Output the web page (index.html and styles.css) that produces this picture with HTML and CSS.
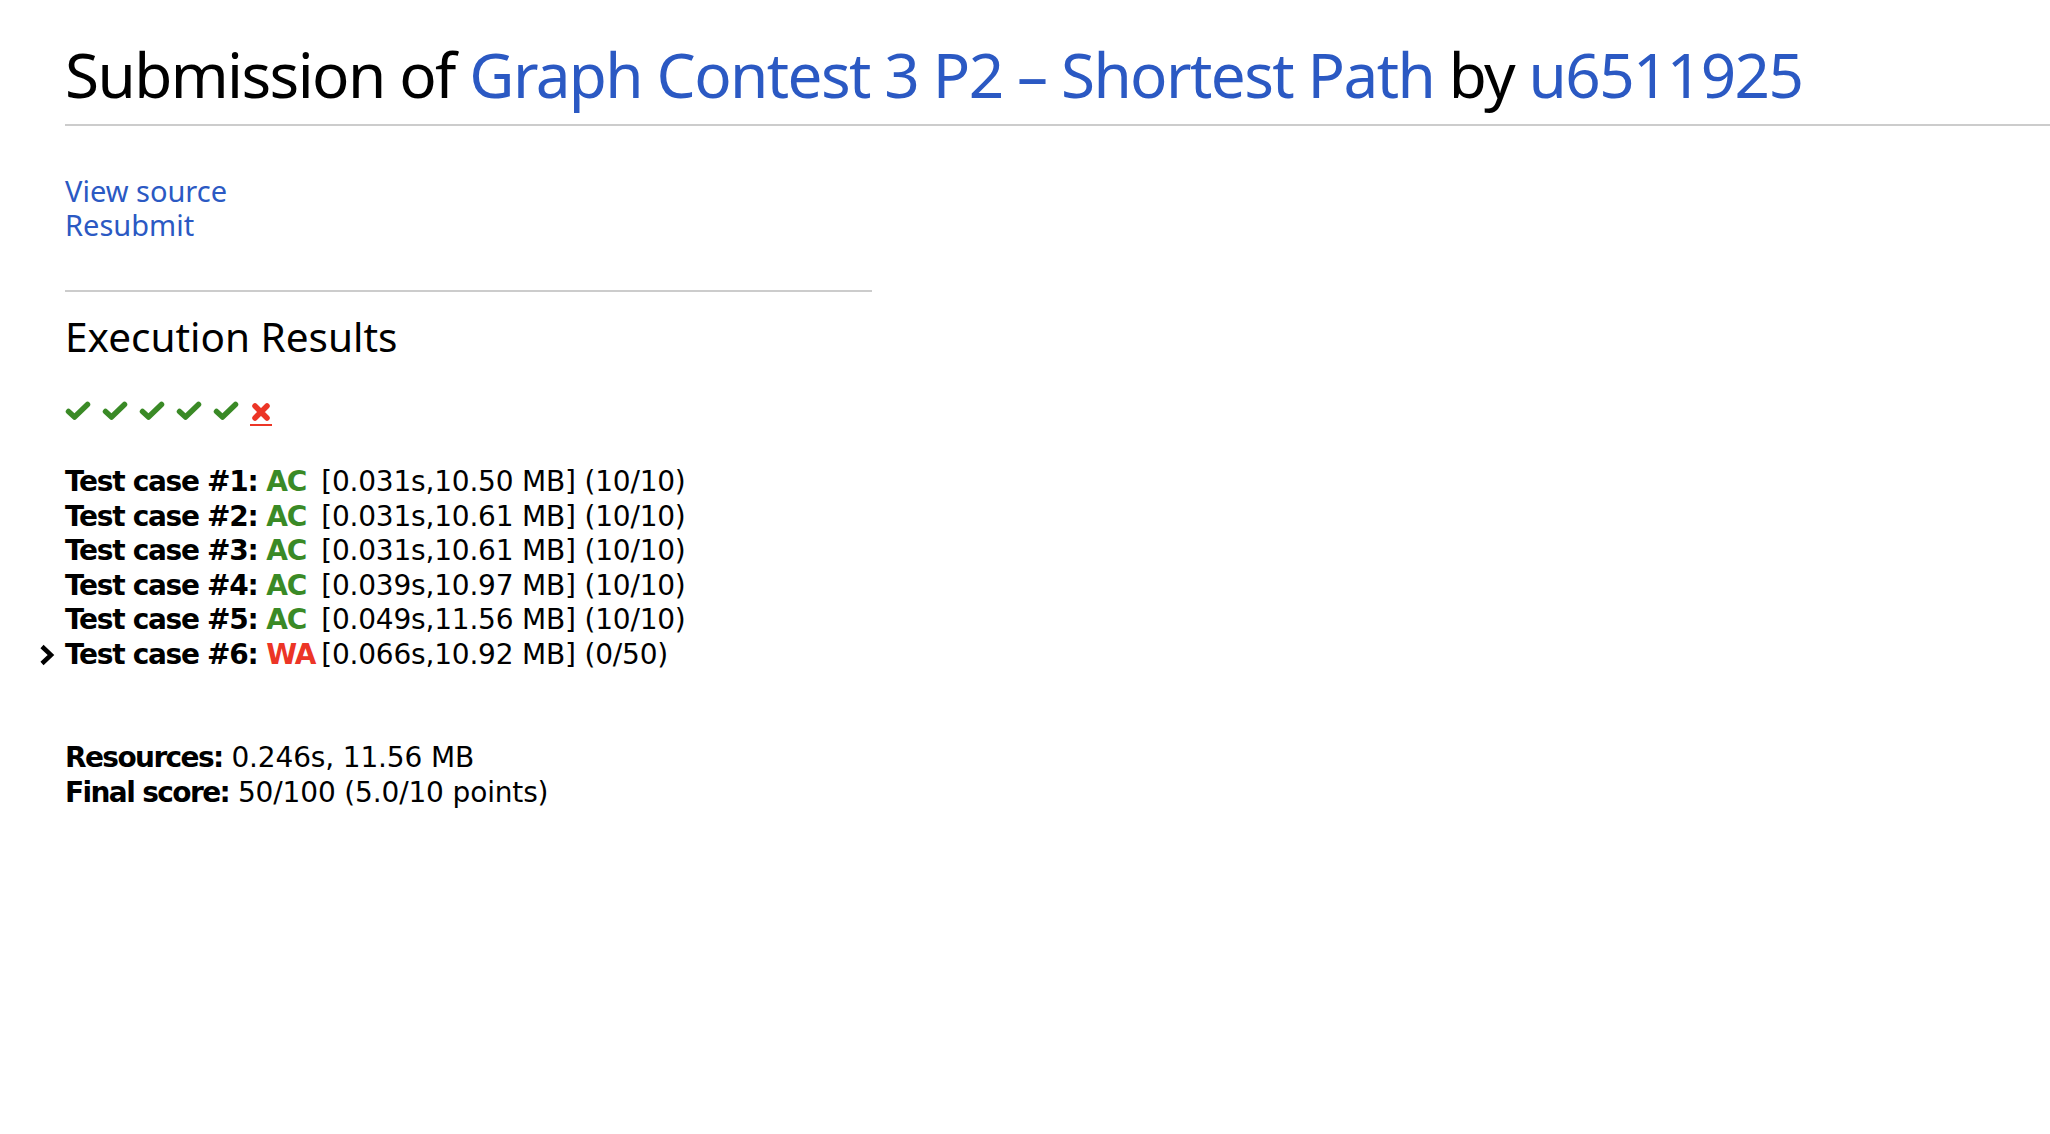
FILE: index.html
```html
<!DOCTYPE html>
<html lang="en">
<head>
<meta charset="utf-8">
<title>Submission of Graph Contest 3 P2 – Shortest Path by u6511925</title>
<link rel="stylesheet" href="styles.css">
</head>
<body>
<h2 class="page-title">Submission of <a href="#">Graph Contest 3 P2 – Shortest Path</a> by <a href="#">u6511925</a></h2>
<hr class="rule-full">
<main class="content">
  <div class="actions">
    <a href="#">View source</a>
    <a href="#">Resubmit</a>
  </div>
  <hr class="rule-section">
  <h3 class="section-title">Execution Results</h3>
  <div class="status-icons">
    <span class="icon-ok"><svg viewBox="0 0 26 20" width="26" height="20"><polyline points="3.5,10.5 9.5,16 22.5,3.5" /></svg></span>
    <span class="icon-ok"><svg viewBox="0 0 26 20" width="26" height="20"><polyline points="3.5,10.5 9.5,16 22.5,3.5" /></svg></span>
    <span class="icon-ok"><svg viewBox="0 0 26 20" width="26" height="20"><polyline points="3.5,10.5 9.5,16 22.5,3.5" /></svg></span>
    <span class="icon-ok"><svg viewBox="0 0 26 20" width="26" height="20"><polyline points="3.5,10.5 9.5,16 22.5,3.5" /></svg></span>
    <span class="icon-ok"><svg viewBox="0 0 26 20" width="26" height="20"><polyline points="3.5,10.5 9.5,16 22.5,3.5" /></svg></span>
    <a href="#" class="icon-bad"><svg viewBox="0 0 20 18" width="20" height="18"><path d="M4 3 L16 15 M16 3 L4 15" /></svg></a>
  </div>
  <div class="cases">
    <div class="case"><b>Test case #1:</b> <span class="st st-ac">AC</span><span class="meta">[0.031s,10.50 MB] (10/10)</span></div>
    <div class="case"><b>Test case #2:</b> <span class="st st-ac">AC</span><span class="meta">[0.031s,10.61 MB] (10/10)</span></div>
    <div class="case"><b>Test case #3:</b> <span class="st st-ac">AC</span><span class="meta">[0.031s,10.61 MB] (10/10)</span></div>
    <div class="case"><b>Test case #4:</b> <span class="st st-ac">AC</span><span class="meta">[0.039s,10.97 MB] (10/10)</span></div>
    <div class="case"><b>Test case #5:</b> <span class="st st-ac">AC</span><span class="meta">[0.049s,11.56 MB] (10/10)</span></div>
    <div class="case case-open"><svg class="chevron" viewBox="0 0 18 24" width="18" height="24"><polyline points="4,3.5 13,12 4,20.5" /></svg><b>Test case #6:</b> <span class="st st-wa">WA</span><span class="meta">[0.066s,10.92 MB] (0/50)</span></div>
  </div>
  <div class="summary">
    <div><b>Resources:</b> 0.246s, 11.56 MB</div>
    <div><b>Final score:</b> 50/100 (5.0/10 points)</div>
  </div>
</main>
</body>
</html>
```

FILE: styles.css
```css
html, body {
  margin: 0;
  padding: 0;
  background: #fff;
  color: #000;
}
body {
  font-family: "Noto Sans", "Open Sans", sans-serif;
}
a {
  color: #2b59c3;
  text-decoration: none;
}
.page-title {
  margin: 32px 0 0 65px;
  font-size: 62px;
  font-weight: 400;
  line-height: 84px;
  letter-spacing: -1.6px;
  white-space: nowrap;
}
.rule-full {
  margin: 8px 0 0 65px;
  border: 0;
  border-top: 2px solid #cccccc;
  height: 0;
}
.content {
  padding-left: 65px;
}
.actions {
  margin-top: 48px;
  display: flex;
  flex-direction: column;
  align-items: flex-start;
  gap: 1px;
  font-size: 29px;
  line-height: 33px;
}
.rule-section {
  width: 807px;
  margin: 49px 0 0 0;
  border: 0;
  border-top: 2px solid #cccccc;
  height: 0;
}
.section-title {
  margin: 21px 0 0 0;
  font-size: 40.5px;
  font-weight: 400;
  line-height: 48px;
}
.status-icons {
  margin-top: 40px;
  height: 26px;
  display: flex;
  align-items: flex-start;
  gap: 11px;
}
.icon-ok svg {
  display: block;
  fill: none;
  stroke: #3a8a26;
  stroke-width: 5.5;
  stroke-linecap: round;
  stroke-linejoin: round;
}
.icon-bad {
  display: block;
  margin-left: 0;
  padding: 2px 1px 3px;
  border-bottom: 2px solid #ec3526;
}
.icon-bad svg {
  display: block;
  fill: none;
  stroke: #ec3526;
  stroke-width: 5.5;
  stroke-linecap: round;
}
.cases {
  margin-top: 38px;
  font-family: "DejaVu Sans", sans-serif;
  font-size: 28px;
  line-height: 34.5px;
}
.case {
  position: relative;
  white-space: nowrap;
}
.case b {
  letter-spacing: -1.3px;
}
.summary b {
  letter-spacing: -1.6px;
}
.st {
  display: inline-block;
  min-width: 55px;
  font-weight: 700;
  letter-spacing: -1.2px;
}
.meta {
  letter-spacing: -0.2px;
}
.st-ac { color: #3a8a26; }
.st-wa { color: #ec3526; }
.chevron {
  position: absolute;
  left: -27px;
  top: 5px;
  fill: none;
  stroke: #000;
  stroke-width: 4.5;
  stroke-linejoin: miter;
}
.summary {
  margin-top: 68px;
  font-family: "DejaVu Sans", sans-serif;
  font-size: 28px;
  line-height: 35px;
  letter-spacing: -0.15px;
}
```
